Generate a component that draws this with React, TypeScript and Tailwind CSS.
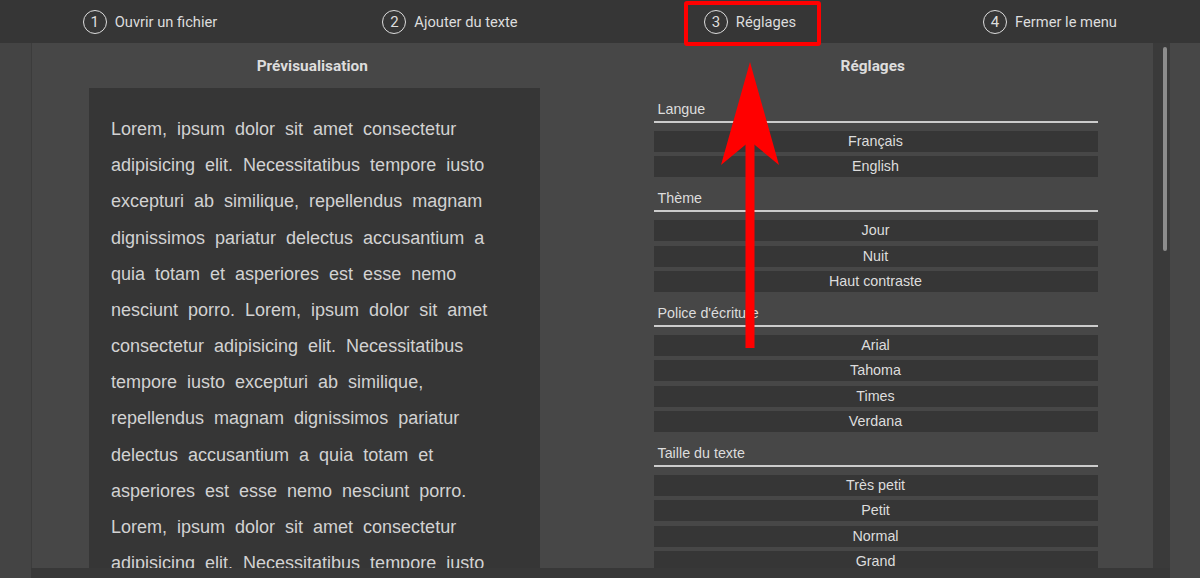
const navItems = [
  { n: 1, label: "Ouvrir un fichier" },
  { n: 2, label: "Ajouter du texte" },
  { n: 3, label: "Réglages" },
  { n: 4, label: "Fermer le menu" },
]

const settings = [
  { title: "Langue", options: ["Français", "English"] },
  { title: "Thème", options: ["Jour", "Nuit", "Haut contraste"] },
  { title: "Police d'écriture", options: ["Arial", "Tahoma", "Times", "Verdana"] },
  { title: "Taille du texte", options: ["Très petit", "Petit", "Normal", "Grand"] },
]

const previewLines = [
  "Lorem, ipsum dolor sit amet consectetur",
  "adipisicing elit. Necessitatibus tempore iusto",
  "excepturi ab similique, repellendus magnam",
  "dignissimos pariatur delectus accusantium a",
  "quia totam et asperiores est esse nemo",
  "nesciunt porro. Lorem, ipsum dolor sit amet",
  "consectetur adipisicing elit. Necessitatibus",
  "tempore iusto excepturi ab similique,",
  "repellendus magnam dignissimos pariatur",
  "delectus accusantium a quia totam et",
  "asperiores est esse nemo nesciunt porro.",
  "Lorem, ipsum dolor sit amet consectetur",
  "adipisicing elit. Necessitatibus tempore iusto",
  "excepturi ab similique, repellendus magnam",
]

const App = () => {
  return (
    <div className="relative w-[1200px] h-[578px] overflow-hidden bg-[#444444] font-['Roboto',sans-serif] text-[#dddddd]">
      {/* Top menu */}
      <nav className="grid grid-cols-4 h-[43px] bg-[#363636]">
        {navItems.map((item) => (
          <div key={item.n} className="flex items-center justify-center gap-2 pt-[1px]">
            <span className="flex items-center justify-center w-6 h-6 rounded-full border-[1.5px] border-[#dddddd] text-[15px] leading-none">
              {item.n}
            </span>
            <span className="text-[14.7px]">{item.label}</span>
          </div>
        ))}
      </nav>

      {/* Body */}
      <div className="flex h-[535px]">
        <div className="w-[31px] shrink-0 bg-[#444444]" />
        <div className="flex flex-col w-[1139px] shrink-0 bg-[#3a3a3a]">
          <div className="flex h-[525px]">
            <main className="grid grid-cols-2 w-[1122px] h-full overflow-hidden bg-[#474747] border-l border-[#3c3c3c]">
              {/* Left */}
              <section className="pt-[14px]">
                <h2 className="text-center text-[15.4px] leading-[18px] font-bold">Prévisualisation</h2>
                <div className="mt-[13px] ml-[57px] w-[451px] h-[600px] bg-[#363636] pt-[23px] pl-[22px]">
                  <div className="font-['Liberation_Sans',Arial,sans-serif] text-[18px] leading-[36.17px] [word-spacing:5px] text-[#d2d2d2]">
                    {previewLines.map((line, i) => (
                      <div key={i} className="whitespace-nowrap">{line}</div>
                    ))}
                  </div>
                </div>
              </section>
              {/* Right */}
              <section className="pt-[14px]">
                <h2 className="text-center text-[15.4px] leading-[18px] font-bold">Réglages</h2>
                <div className="mt-[25px] ml-[61px] w-[444px] flex flex-col gap-[12px] font-['Liberation_Sans',Arial,sans-serif] text-[14.3px]">
                  {settings.map((group) => (
                    <div key={group.title}>
                      <div className="px-1 pb-[3px] leading-[18px] border-b-2 border-[#cccccc]">
                        {group.title}
                      </div>
                      <div className="mt-2 flex flex-col gap-[4.33px]">
                        {group.options.map((opt) => (
                          <button
                            key={opt}
                            className="h-[21px] bg-[#363636] text-center leading-[21px] text-[#dddddd]"
                          >
                            {opt}
                          </button>
                        ))}
                      </div>
                    </div>
                  ))}
                </div>
              </section>
            </main>
            {/* Scrollbar */}
            <div className="w-[17px] h-full pt-[4px] pl-[10px]">
              <div className="w-[4px] h-[204px] rounded-full bg-[#8c8c8c]" />
            </div>
          </div>
          <div className="h-[10px] bg-[#383838]" />
        </div>
        <div className="flex-1 bg-[#474747]" />
      </div>

      {/* Highlight box */}
      <div className="absolute left-[684px] top-[1px] w-[137px] h-[45px] border-4 border-[#ff0000] rounded-[3px]" />

      {/* Arrow */}
      <svg className="absolute left-0 top-0 pointer-events-none" width="1200" height="578" viewBox="0 0 1200 578">
        <rect x="745.5" y="138" width="9" height="210" fill="#ff0000" />
        <polygon points="750,62 779,165 750,141 721,165" fill="#ff0000" />
      </svg>
    </div>
  )
}

export default App
